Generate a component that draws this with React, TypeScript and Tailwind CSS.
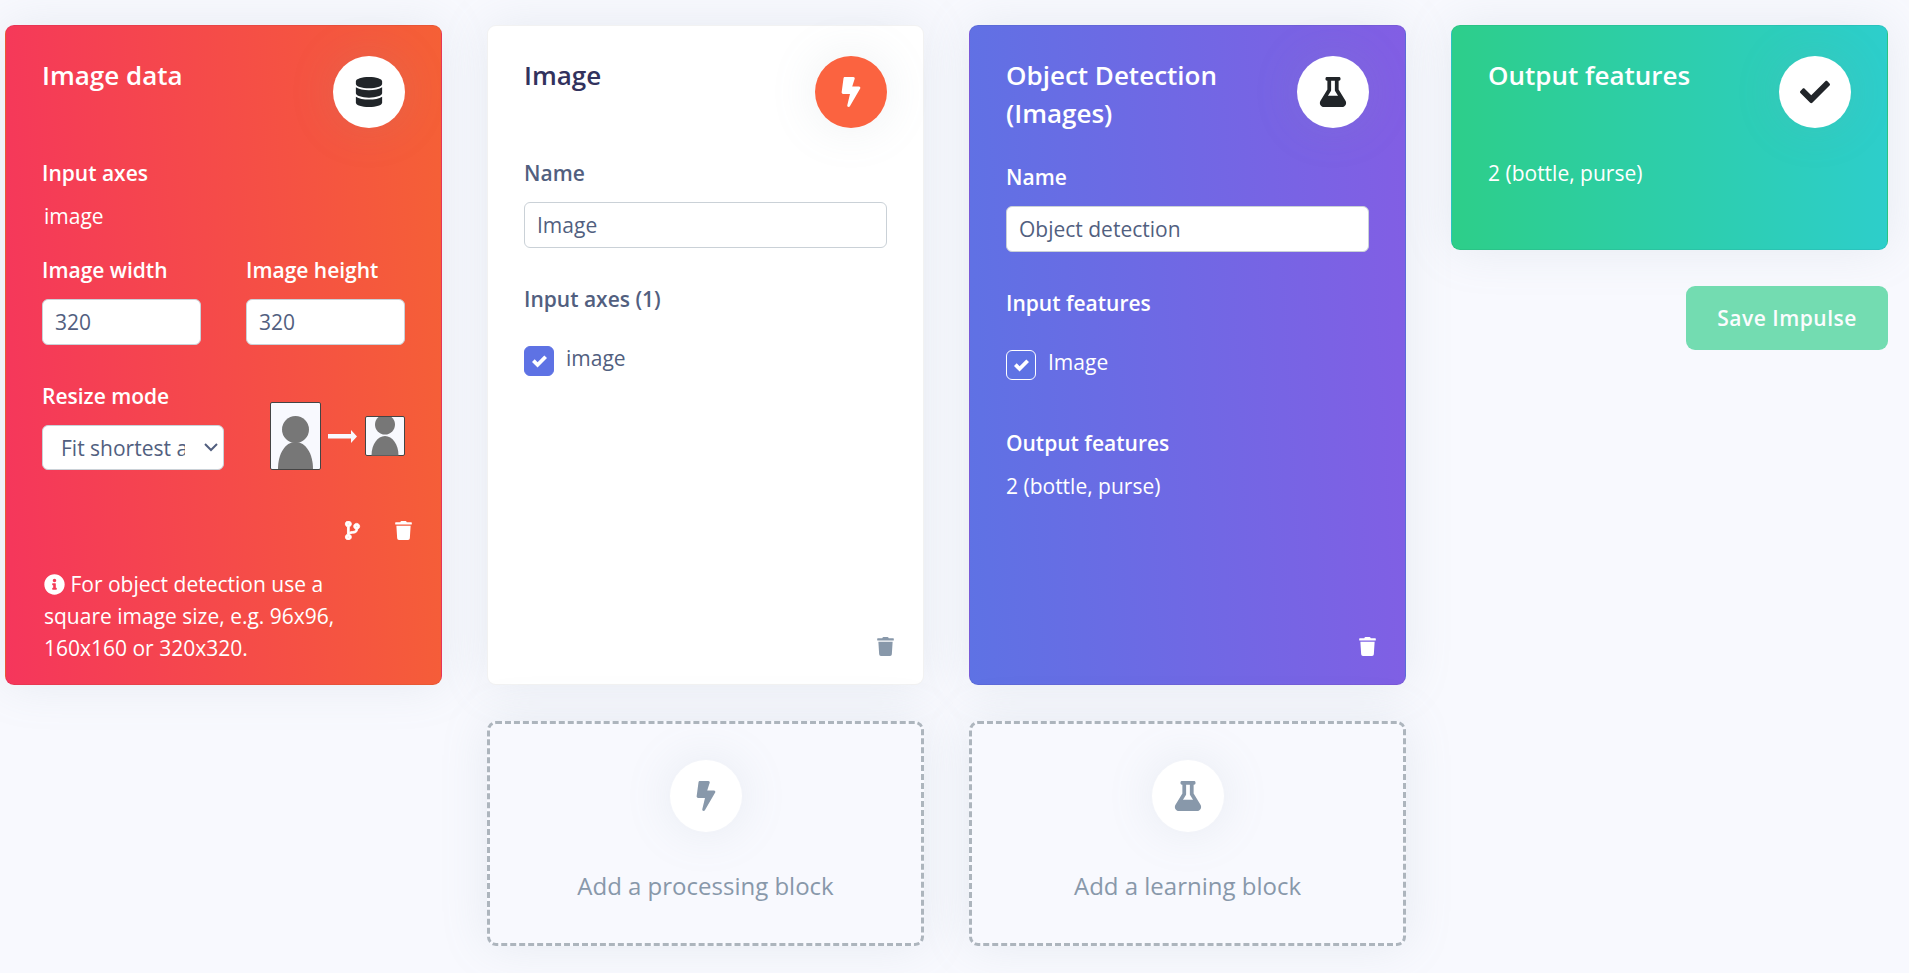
import { useId, useState } from "react";
import type { ReactNode } from "react";
import { FaBolt, FaCheck, FaCodeBranch, FaDatabase, FaFlask, FaInfoCircle, FaTrash } from "react-icons/fa";

const shadow = "shadow-[0_0_48px_0_rgba(136,152,170,0.15)]";

function Card({ className, children }: { className: string; children: ReactNode }) {
  return (
    <section className={`flex flex-col rounded-[9px] border border-black/5 px-9 pt-[30px] ${shadow} ${className}`}>
      {children}
    </section>
  );
}

function Circle({ className, children }: { className: string; children: ReactNode }) {
  return (
    <div className={`flex size-18 shrink-0 items-center justify-center rounded-full text-[30px] ${shadow} ${className}`}>
      {children}
    </div>
  );
}

function Header({ title, children }: { title: string; children: ReactNode }) {
  return (
    <header className="mb-[29px] flex items-start justify-between">
      <h2 className="max-w-[240px] text-[26px] leading-[38px] font-semibold">{title}</h2>
      {children}
    </header>
  );
}

function TextField({ label, initial }: { label: string; initial: string }) {
  const id = useId();
  const [value, setValue] = useState(initial);
  return (
    <div className="flex min-w-0 flex-col gap-[13px]">
      <label htmlFor={id} className="font-semibold">{label}</label>
      <input
        id={id}
        value={value}
        onChange={(e) => setValue(e.target.value)}
        className="h-[46px] w-full rounded-md border border-[#cad1d7] bg-white px-3 text-[#525f7f] outline-none"
      />
    </div>
  );
}

function CheckField({ label, boxClass }: { label: string; boxClass: string }) {
  return (
    <label className="flex gap-3">
      <span className="mt-1 grid size-[30px] place-items-center">
        <input
          type="checkbox"
          defaultChecked
          className={`peer col-start-1 row-start-1 size-[30px] appearance-none rounded-md border ${boxClass}`}
        />
        <svg viewBox="0 0 8 8" className="pointer-events-none col-start-1 row-start-1 hidden size-[15px] fill-white peer-checked:block">
          <path d="M6.564.75l-3.59 3.612-1.538-1.55L0 4.26 2.974 7.25 8 2.193z" />
        </svg>
      </span>
      {label}
    </label>
  );
}

function IconButton({ label, children }: { label: string; children: ReactNode }) {
  return (
    <button type="button" aria-label={label} className="cursor-pointer text-[19px]">
      {children}
    </button>
  );
}

function ResizePreview() {
  return (
    <svg viewBox="0 0 135 68" className="h-[68px] w-[135px]">
      <rect x="0.5" y="0.5" width="50" height="67" rx="1.5" fill="#f8f9fe" stroke="#444" />
      <circle cx="25.5" cy="27.5" r="13.5" fill="#777" />
      <path d="M8 67c0-15 7-27 17.500-27S43 52 43 67z" fill="#777" />
      <path d="M58 32h23v-4l6 6.500-6 6.500v-4.500H58z" fill="#f8f9fe" />
      <rect x="95.500" y="14.500" width="39" height="39" rx="1.500" fill="#f8f9fe" stroke="#444" />
      <path d="M108.500 15h13a10 10 0 1 1-13 0z" fill="#777" />
      <path d="M101.500 53.500c0-11 6-19.500 13.500-19.500s13.500 8.500 13.500 19.500z" fill="#777" />
    </svg>
  );
}

function AddBlock({ label, children }: { label: string; children: ReactNode }) {
  return (
    <button
      type="button"
      className={`flex h-[225px] w-full cursor-pointer flex-col items-center rounded-[9px] border-3 border-dashed border-[#adb5bd] bg-[#f8f9fe] pt-9 text-[#8898aa] ${shadow}`}
    >
      <Circle className="bg-white">{children}</Circle>
      <span className="mt-9 text-[24px] leading-9">{label}</span>
    </button>
  );
}

export default function App() {
  return (
    <main className="grid min-h-screen grid-cols-4 items-start gap-x-[45px] bg-[#f8f9fe] pt-[25px] pr-[21px] pb-5 pl-[5px] font-['Open_Sans',sans-serif] text-[21px] leading-8 text-[#525f7f]">
      <Card className="min-h-[660px] bg-[linear-gradient(87deg,#f5365c,#f56036)] pb-5 text-white">
        <Header title="Image data">
          <Circle className="bg-white text-[#212529]"><FaDatabase /></Circle>
        </Header>
        <p className="font-semibold">Input axes</p>
        <p className="mt-[11px] px-0.5">image</p>
        <div className="mt-[22px] grid grid-cols-2 gap-[45px]">
          <TextField label="Image width" initial="320" />
          <TextField label="Image height" initial="320" />
        </div>
        <div className="mt-[35px] flex items-end justify-between">
          <div className="flex flex-col gap-[13px]">
            <label htmlFor="resize" className="font-semibold">Resize mode</label>
            <div className="grid w-[182px] items-center">
              <select
                id="resize"
                className="col-start-1 row-start-1 h-[45px] w-full appearance-none rounded-md border border-[#cad1d7] bg-white pr-[38px] pl-[18px] text-[#525f7f] outline-none"
              >
                <option>Fit shortest axis</option>
                <option>Fit longest axis</option>
                <option>Squash</option>
              </select>
              <svg viewBox="0 0 14 9" className="pointer-events-none col-start-1 row-start-1 mr-1.5 h-[9px] w-3.5 justify-self-end fill-none stroke-[#525f7f] stroke-2">
                <path d="M1 1l6 6 6-6" />
              </svg>
            </div>
          </div>
          <ResizePreview />
        </div>
        <div className="mt-auto -mr-2 mb-7 flex justify-end gap-8">
          <IconButton label="Versions"><FaCodeBranch className="stroke-white stroke-[24px]" /></IconButton>
          <IconButton label="Delete input block"><FaTrash /></IconButton>
        </div>
        <p className="max-w-[300px] px-0.5">
          <FaInfoCircle className="inline align-[-3px]" /> For object detection use a square image size, e.g. 96x96, 160x160 or 320x320.
        </p>
      </Card>

      <div className="flex flex-col gap-9">
        <Card className="min-h-[660px] bg-white pb-7">
          <div className="text-[#32325d]">
            <Header title="Image">
              <Circle className="bg-[#fb6340] text-white"><FaBolt /></Circle>
            </Header>
          </div>
          <TextField label="Name" initial="Image" />
          <p className="mt-[35px] mb-[27px] font-semibold">Input axes (1)</p>
          <CheckField label="image" boxClass="border-[#5e72e4] bg-[#5e72e4]" />
          <div className="mt-auto -mr-2 flex justify-end text-[#8898aa]">
            <IconButton label="Delete processing block"><FaTrash /></IconButton>
          </div>
        </Card>
        <AddBlock label="Add a processing block"><FaBolt /></AddBlock>
      </div>

      <div className="flex flex-col gap-9">
        <Card className="min-h-[660px] bg-[linear-gradient(87deg,#5e72e4,#825ee4)] pb-7 text-white">
          <Header title="Object Detection (Images)">
            <Circle className="bg-white text-[#212529]"><FaFlask /></Circle>
          </Header>
          <TextField label="Name" initial="Object detection" />
          <p className="mt-[35px] mb-[27px] font-semibold">Input features</p>
          <CheckField label="Image" boxClass="border-white bg-[#5e72e4]" />
          <p className="mt-[47px] font-semibold">Output features</p>
          <p className="mt-[11px]">2 (bottle, purse)</p>
          <div className="mt-auto -mr-2 flex justify-end">
            <IconButton label="Delete learning block"><FaTrash /></IconButton>
          </div>
        </Card>
        <AddBlock label="Add a learning block"><FaFlask /></AddBlock>
      </div>

      <div className="flex flex-col gap-9">
        <Card className="min-h-[225px] bg-[linear-gradient(87deg,#2dce89,#2dcecc)] text-white">
          <Header title="Output features">
            <Circle className="bg-white text-[#212529]"><FaCheck /></Circle>
          </Header>
          <p>2 (bottle, purse)</p>
        </Card>
        <button
          type="button"
          disabled
          className="self-end rounded-[9px] bg-[#2dce89] px-[31px] py-4 font-semibold tracking-wide text-white opacity-65"
        >
          Save Impulse
        </button>
      </div>
    </main>
  );
}
